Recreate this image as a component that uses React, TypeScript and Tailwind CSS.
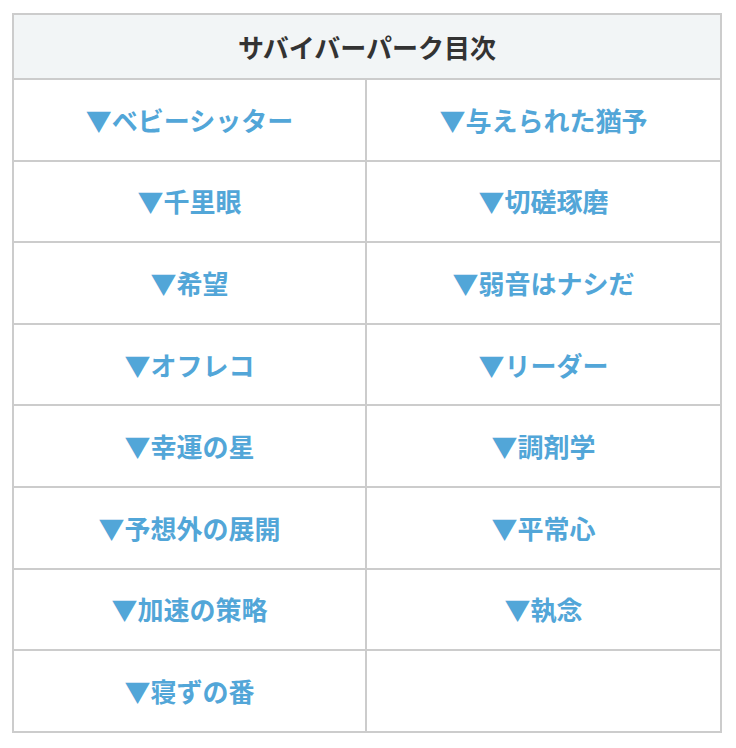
const rows: [string, string][] = [
	["▼ベビーシッター", "▼与えられた猶予"],
	["▼千里眼", "▼切磋琢磨"],
	["▼希望", "▼弱音はナシだ"],
	["▼オフレコ", "▼リーダー"],
	["▼幸運の星", "▼調剤学"],
	["▼予想外の展開", "▼平常心"],
	["▼加速の策略", "▼執念"],
	["▼寝ずの番", ""],
];

export default function App() {
	return (
		<div className="min-h-[748px] bg-white pt-[13px] pl-3 font-['Noto_Sans_CJK_JP','Noto_Sans',sans-serif]">
			<div className="w-[710px] border-2 border-[#cccccc]">
				{/* Header */}
				<div className="h-[63px] bg-[#f2f5f6] flex items-center justify-center text-[26px] font-bold text-[#333333] leading-none">
					サバイバーパーク目次
				</div>

				<div className="grid grid-cols-2">
					{rows.map(([left, right], i) => (
						<div key={i} className="contents">
							<div className="h-[81.6px] border-t-2 border-r-2 border-[#cccccc] flex items-center justify-center">
								<a href="#" className="text-[26px] font-bold text-[#52a6d8] leading-none">
									{left}
								</a>
							</div>
							<div className="h-[81.6px] border-t-2 border-[#cccccc] flex items-center justify-center">
								{right && (
									<a href="#" className="text-[26px] font-bold text-[#52a6d8] leading-none">
										{right}
									</a>
								)}
							</div>
						</div>
					))}
				</div>
			</div>
		</div>
	);
}
